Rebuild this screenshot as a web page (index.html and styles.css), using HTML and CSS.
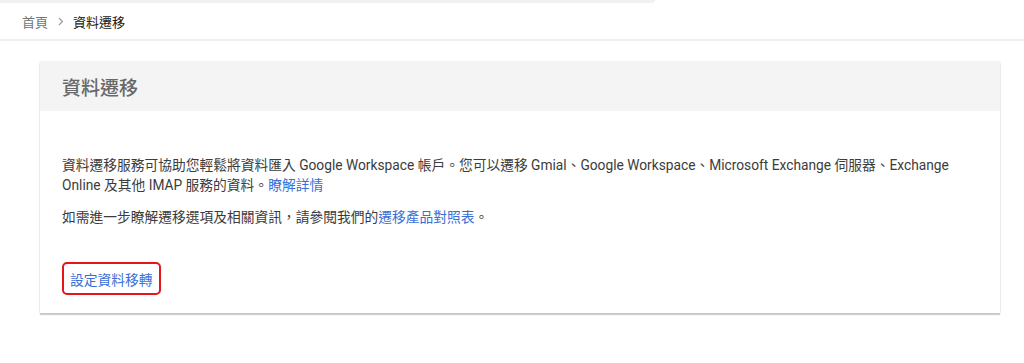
FILE: index.html
```html
<!DOCTYPE html>
<html lang="zh-Hant">
<head>
    <meta charset="UTF-8">
    <meta name="viewport" content="width=device-width, initial-scale=1.0">
    <title>資料遷移</title>
    <link rel="stylesheet" href="styles.css">
</head>
<body>
    <div class="top-strip"></div>
    <nav class="breadcrumb">
        <span class="crumb-home">首頁</span>
        <svg class="crumb-sep" width="6" height="9" viewBox="0 0 6 9"><path d="M1 1l3.5 3.5L1 8" fill="none" stroke="#9e9e9e" stroke-width="1.2"/></svg>
        <span class="crumb-current">資料遷移</span>
    </nav>

    <main class="content">
        <section class="card">
            <div class="card-header">
                <h1>資料遷移</h1>
            </div>
            <div class="card-body">
                <p>資料遷移服務可協助您輕鬆將資料匯入 Google Workspace 帳戶。您可以遷移 Gmial、Google Workspace、Microsoft Exchange 伺服器、Exchange Online 及其他 IMAP 服務的資料。<a href="#">瞭解詳情</a></p>
                <p>如需進一步瞭解遷移選項及相關資訊，請參閱我們的<a href="#">遷移產品對照表</a>。</p>
                <button class="setup-btn">設定資料移轉</button>
            </div>
        </section>
    </main>
</body>
</html>
```

FILE: styles.css
```css
body {
    margin: 0;
    font-family: Roboto, "Noto Sans CJK TC", sans-serif;
    color: #333;
    background: #fff;
}
.top-strip {
    width: 655px;
    height: 3px;
    background: #f1f1f1;
    border-bottom-right-radius: 3px;
}
.breadcrumb {
    display: flex;
    align-items: center;
    height: 36px;
    padding-left: 22px;
    font-size: 13px;
    border-bottom: 2px solid #efefef;
}
.crumb-home {
    color: #757575;
    margin-right: 10px;
}
.crumb-current {
    color: #212121;
    margin-left: 9px;
}
.content {
    padding: 21px 24px 48px 40px;
}
.card {
    background: #fff;
    box-shadow: 0 2px 1px rgba(0, 0, 0, 0.18), 0 0 2px rgba(0, 0, 0, 0.15);
}
.card-header {
    background: #f4f4f4;
    height: 49px;
    display: flex;
    align-items: center;
    padding-left: 22px;
}
.card-header h1 {
    margin: 0;
    font-size: 19px;
    font-weight: 500;
    color: #686868;
}
.card-body {
    padding: 44px 22px 18px;
}
.card-body p {
    margin: 0 0 12px;
    font-size: 13.75px;
    line-height: 20px;
    color: #3c3c3c;
}
.card-body a {
    color: #3b6fd8;
    text-decoration: none;
}
.setup-btn {
    display: block;
    margin-top: 35px;
    height: 33px;
    padding: 0 6px;
    font-family: inherit;
    font-size: 13.75px;
    color: #3b6fd8;
    background: #fff;
    border: 2px solid #e8141c;
    border-radius: 5px;
}
```
